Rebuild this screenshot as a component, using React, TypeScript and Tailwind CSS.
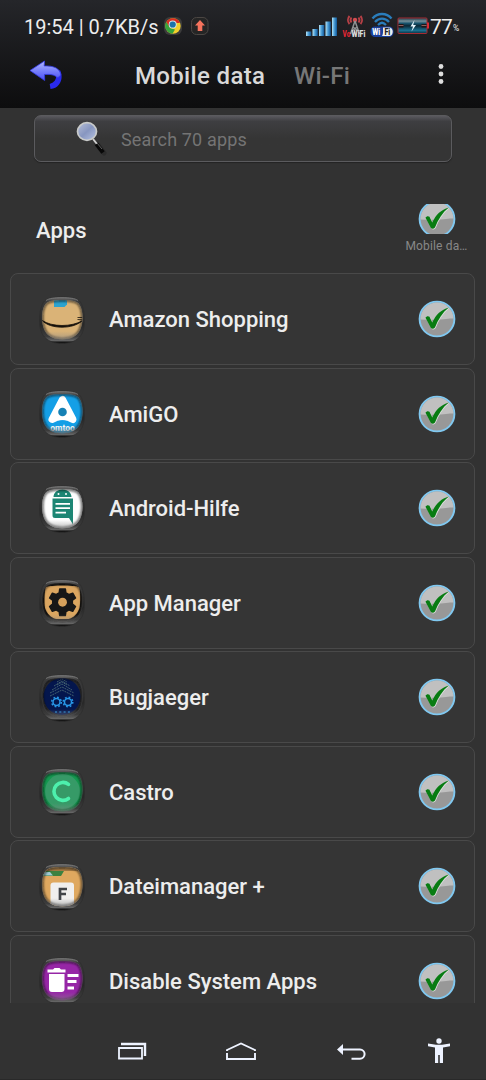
import type { ReactNode } from 'react';

type AppItem = {
  id: string;
  name: string;
  art: ReactNode;
};

const SHELL =
  'M24 1C32 1 38 1.800 41.500 5C45 9 46.500 17 46.500 24C46.500 31 45.500 36.500 41.500 41C37.500 45.500 31 47.500 24 47.500C17 47.500 10.500 45.500 6.500 41C2.500 36.500 1.500 31 1.500 24C1.500 17 3 9 6.500 5C10 1.800 16 1 24 1Z';
const FACE =
  'M24.300 4C31 4 37.500 4.500 40.500 7.500C43.500 11 44.600 17 44.500 22C44.300 29 42.500 35 38.500 38.800C35 42 30 43.300 24.300 43.300C18.500 43.300 13.500 42 10 38.800C6 35 4.200 29 4.100 22C4 17 5 11 8 7.500C11 4.500 17.500 4 24.300 4Z';

const GEAR =
  'M19.14 12.94c.04-.3.06-.61.06-.94s-.02-.64-.07-.94l2.03-1.58a.49.49 0 0 0 .12-.61l-1.92-3.32a.49.49 0 0 0-.59-.22l-2.39.96a7 7 0 0 0-1.62-.94l-.36-2.54a.48.48 0 0 0-.48-.41h-3.84a.48.48 0 0 0-.47.41l-.36 2.54c-.59.24-1.13.57-1.62.94l-2.39-.96a.49.49 0 0 0-.59.22L2.74 8.87a.48.48 0 0 0 .12.61l2.03 1.58c-.05.3-.09.63-.09.94s.02.64.07.94l-2.03 1.58a.49.49 0 0 0-.12.61l1.92 3.32c.12.22.37.29.59.22l2.39-.96c.5.38 1.030.7 1.620.94l.36 2.540c.05.24.24.41.48.41h3.840c.24 0 .44-.17.47-.41l.36-2.540c.59-.24 1.130-.56 1.620-.94l2.390.96c.22.08.47 0 .59-.22l1.920-3.320a.48.48 0 0 0-.12-.61z';

const TICK =
  'M7.500 17.800c1-1.500 2.500-2 4-1l2.800 5.700C18 14.500 23 9.800 30.800 7.500 24.500 12.500 20 19.500 17 27.500c-1.300 1.700-3.200 1.700-4.200.3z';

const apps: AppItem[] = [
  {
    id: 'amazon',
    name: 'Amazon Shopping',
    art: (
      <>
        <rect width="48" height="48" fill="#dab377" />
        <path d="M16 3h13v5.500L26.500 11H16z" fill="#2ba3cf" />
        <path
          d="M4 24.300c5 3.400 12 5.200 20 5.200s15-1.800 20-4.500c-5 4.200-12 6.200-20 6.200S8 29 4 24.300z"
          fill="#17110b"
          stroke="#17110b"
          strokeWidth="0.8"
        />
        <path d="M39.500 21.500h5M39.500 23.500l5 .3" stroke="#17110b" strokeWidth="0.800" />
      </>
    )
  },
  {
    id: 'amigo',
    name: 'AmiGO',
    art: (
      <>
        <rect width="48" height="48" fill="#149fe6" />
        <path
          d="M24.500 9.500L14 29.500c3-2 7-2.800 10.500-2.800S32 27.500 35 29.500z"
          fill="#fff"
          stroke="#fff"
          strokeWidth="7"
          strokeLinejoin="round"
        />
        <path d="M17 34c2.500-5 12.500-5 15 0z" fill="#149fe6" />
        <circle cx="24.500" cy="22" r="4.300" fill="#1581b5" />
        <text
          x="24.500"
          y="41"
          textAnchor="middle"
          className="fill-white font-['Roboto'] text-[8.500px] font-bold"
        >
          omtoo
        </text>
      </>
    )
  },
  {
    id: 'hilfe',
    name: 'Android-Hilfe',
    art: (
      <>
        <rect width="48" height="48" fill="#fdfdfd" />
        <path
          d="M15.500 12c0-4.500 4-7.500 9-7.500s9 3 9 7.500zM14.500 13.500h20.500v26l-4-6.500H17a2.500 2.500 0 0 1-2.500-2.500z"
          fill="#1c8573"
        />
        <circle cx="20.500" cy="9" r="1" fill="#fff" />
        <circle cx="28" cy="9" r="1" fill="#fff" />
        <path d="M17.500 18.800h14.500M17.500 23.200h14.500M17.500 27.700h10.500" stroke="#fff" strokeWidth="1.700" />
      </>
    )
  },
  {
    id: 'manager',
    name: 'App Manager',
    art: (
      <>
        <rect width="48" height="48" fill="#191613" />
        <path
          d="M8 8c5-2 28-2 33 0 1.500 2 1.500 16 .5 21-1.500 5-6 10-11 11H18C13 39 8.500 34 7 29 6 24 6.500 10 8 8z"
          fill="#dba660"
        />
        <g transform="translate(6.900 5.600) scale(1.470)">
          <path d={GEAR} fill="#171717" />
          <circle cx="12" cy="12" r="3" fill="#d6a15c" />
        </g>
      </>
    )
  },
  {
    id: 'bugjaeger',
    name: 'Bugjaeger',
    art: (
      <>
        <rect width="48" height="48" fill="#2b2b2e" />
        <circle cx="24" cy="22.500" r="18.500" fill="#04164d" />
        <g fill="none" stroke="#42606e" strokeWidth="1" strokeDasharray="2 .7">
          <path d="M19 8l5-3 5 3M16 12l8-5 8 5M19 11l5-3 5 3M14 16l10-6 10 6M12 19l12-6 12 6M12 22l12-6 12 6" />
        </g>
        <g fill="none" stroke="#2897e8" strokeWidth="1.500">
          <circle cx="18.500" cy="28" r="3.500" />
          <circle cx="30" cy="28" r="3.500" />
          <circle cx="18.500" cy="28" r="4.800" strokeDasharray="1.800 1.970" />
          <circle cx="30" cy="28" r="4.800" strokeDasharray="1.800 1.970" />
          <path d="M17 38h15" stroke="#1c74bb" strokeWidth="1.700" strokeDasharray="2 2.300" />
        </g>
      </>
    )
  },
  {
    id: 'castro',
    name: 'Castro',
    art: (
      <>
        <rect width="48" height="48" fill="#14984f" />
        <circle cx="24.500" cy="23.500" r="17.500" fill="#369a67" />
        <path
          d="M30.500 16.300a9 9 0 1 0 0 14.200"
          fill="none"
          stroke="#4df0ad"
          strokeWidth="3.600"
          strokeLinecap="round"
        />
      </>
    )
  },
  {
    id: 'datei',
    name: 'Dateimanager +',
    art: (
      <>
        <rect width="48" height="48" fill="#dfa85f" />
        <path d="M4 3h40v5H4z" fill="#a77c45" />
        <path d="M4 12l4-4h18l-3 5H4z" fill="#3c8140" />
        <path d="M4 12.500h11l-3-3.500H7z" fill="#9fcbd3" />
        <rect x="12.500" y="19.500" width="23.500" height="25" rx="3" fill="#f0efee" />
        <path d="M22 37V26h7M22 31h6" fill="none" stroke="#414448" strokeWidth="2.700" />
      </>
    )
  },
  {
    id: 'disable',
    name: 'Disable System Apps',
    art: (
      <>
        <rect width="48" height="48" fill="#9626a6" />
        <path
          d="M9.500 12.500h5.500l1.500-1.500h5l1.500 1.500h4.500v3H9.500zM11 17h15.500v15a3 3 0 0 1-3 3h-9.500a3 3 0 0 1-3-3z"
          fill="#fff"
        />
        <path d="M29.500 18.500h11M29.500 24.500h9M29.500 31h6.500" stroke="#fff" strokeWidth="2.900" />
      </>
    )
  }
];

const AppIcon = ({ id, art }: { id: string; art: ReactNode }) => (
  <svg viewBox="0 0 48 49" className="mt-0.5 h-[49px] w-12 shrink-0">
    <defs>
      <clipPath id={`face-${id}`}>
        <path d={FACE} />
      </clipPath>
      <linearGradient id={`shell-${id}`} x1="0" y1="0" x2="0" y2="1">
        <stop offset="0" stopColor="#727272" />
        <stop offset=".1" stopColor="#3a3a3a" />
        <stop offset=".6" stopColor="#272727" />
        <stop offset=".85" stopColor="#3c3c3c" />
        <stop offset=".94" stopColor="#666" />
        <stop offset=".97" stopColor="#151515" />
      </linearGradient>
      <linearGradient id={`lip-${id}`} x1="0" y1="0" x2="0" y2="1">
        <stop offset=".8" stopColor="#888" stopOpacity="0" />
        <stop offset="1" stopColor="#888" stopOpacity=".6" />
      </linearGradient>
      <filter id={`soft-${id}`} x="-10%" y="-10%" width="120%" height="120%">
        <feGaussianBlur stdDeviation="0.900" />
      </filter>
    </defs>
    <path d={SHELL} fill={`url(#shell-${id})`} stroke="#2d2d2d" strokeWidth="0.8" />
    <g clipPath={`url(#face-${id})`}>
      {art}
      <path
        d={FACE}
        fill="none"
        stroke="#111"
        strokeOpacity=".65"
        strokeWidth="2.800"
        filter={`url(#soft-${id})`}
      />
      <rect width="48" height="44" fill={`url(#lip-${id})`} />
    </g>
    <path d={FACE} fill="none" stroke="#777" strokeOpacity=".3" strokeWidth="0.700" />
    <path d="M8 4.500C11 2.400 16 1.700 24 1.700s13 .7 16 2.800" fill="none" stroke="#777" strokeWidth="0.900" />
  </svg>
);

const CheckBadge = ({ cropped = false }: { cropped?: boolean }) => (
  <svg
    viewBox={cropped ? '0 4 38 30' : '0 0 38 38'}
    className={cropped ? 'h-[30px] w-[38px]' : 'size-[38px]'}
  >
    <circle cx="19" cy="19" r="17.400" fill="#989898" stroke="#80c8f0" strokeWidth="1.900" />
    <path d="M2.500 19.500a16.500 16.500 0 0 1 33-1C29 18 24 20.500 2.500 19.500z" fill="#c0c0c0" />
    <path d={TICK} fill="#e0e0e0" transform="translate(.7 .6)" />
    <path d={TICK} fill="#087c12" />
  </svg>
);

const StatusBar = () => (
  <div className="flex h-[52px] items-center pl-6 text-[#ededed]">
    <span className="mt-0.5 w-[135px] text-[20px] leading-6 whitespace-nowrap">
      19:54 | 0,7KB/s
    </span>
    <svg viewBox="0 0 20 20" className="ml-1 size-5">
      <rect x="1" y="1" width="18" height="18" rx="6" fill="#3b3b3b" />
      <circle cx="10" cy="10" r="7.700" fill="#f2cf2c" />
      <path d="M3.300 6A7.700 7.700 0 0 1 17 7h-7L6.500 12z" fill="#d92d22" />
      <path d="M3.300 6A7.700 7.700 0 0 0 9.500 17.700L12 13.500 7 12z" fill="#36a43c" />
      <circle cx="9.700" cy="8.500" r="4" fill="#d7e5e8" />
      <circle cx="9.700" cy="8.500" r="3.100" fill="#1b73ab" />
    </svg>
    <svg viewBox="0 0 20 20" className="ml-[7px] size-5">
      <rect x="1.500" y="1.500" width="16.500" height="17" rx="5" fill="#252525" stroke="#4b4643" />
      <path d="M10 4l5 5.500h-2.700V15H7.700V9.500H5z" fill="#f6735d" />
    </svg>
    <svg viewBox="0 0 34 24" className="ml-[95px] h-6 w-[34px]">
      <defs>
        <linearGradient id="bar">
          <stop stopColor="#b8e4f5" />
          <stop offset=".5" stopColor="#4599d3" />
          <stop offset="1" stopColor="#125595" />
        </linearGradient>
      </defs>
      <g fill="url(#bar)">
        <path d="M1 17.500h5.300v4.500H1z" />
        <path d="M7.500 15h5.300v7H7.500z" />
        <path d="M14 11h5.300v11H14z" />
        <path d="M20.500 7.500h5.300V22h-5.300z" />
        <path d="M27 3.500h5V22h-5z" />
      </g>
    </svg>
    <svg viewBox="0 0 28 26" className="mt-0.5 ml-[2px] h-[26px] w-7">
      <path
        d="M10.500 8.500a4 4 0 0 1 0-5M8.500 10a6 6 0 0 1 0-8M17.500 8.500a4 4 0 0 0 0-5M19.500 10a6 6 0 0 0 0-8"
        fill="none"
        stroke="#b94147"
        strokeWidth="1.900"
      />
      <circle cx="14" cy="6" r="2.200" fill="#d24d50" />
      <path d="M14 7L9.500 20M14 7l4.500 13M12 13l5 4M16 13l-5 4" stroke="#8f9293" strokeWidth="1.500" />
      <text transform="translate(1.500 22.500) scale(.72 1)" className="fill-[#dd2634] font-['Roboto'] text-[9px] font-black">
        Vo
      </text>
      <text transform="translate(10.600 22.500) scale(.78 1)" className="fill-[#ddd] font-['Roboto'] text-[9px] font-black">
        WiFi
      </text>
    </svg>
    <svg viewBox="0 0 24 28" className="ml-px h-7 w-6">
      <path
        d="M2.500 6.500c5-6 14-6 19 0M5 10c4-4.500 10-4.500 14 0M8 13c3-3 5-3 8 0"
        fill="none"
        stroke="#2a7dbc"
        strokeWidth="2.300"
      />
      <rect x=".5" y="14.500" width="23" height="10.500" rx="4.500" fill="#193f9c" />
      <path d="M13 15.500h6c5 0 5 8.500 0 8.500h-7c1.500-2 1-6 1-8.500z" fill="#eee" />
      <text transform="translate(2.200 23) scale(.78 1)" className="fill-white font-['Roboto'] text-[9px] font-black">
        Wi
      </text>
      <text transform="translate(14.500 23) scale(.78 1)" className="fill-[#202020] font-['Roboto'] text-[9px] font-black">
        Fi
      </text>
    </svg>
    <svg viewBox="0 0 33 20" className="ml-[3px] h-5 w-[33px]">
      <defs>
        <linearGradient id="battery" x1="0" y1="0" x2="0" y2="1">
          <stop stopColor="#173442" />
          <stop offset=".2" stopColor="#75909a" />
          <stop offset=".35" stopColor="#17536c" />
          <stop offset=".5" stopColor="#0a2735" />
          <stop offset=".8" stopColor="#1a7191" />
          <stop offset="1" stopColor="#0a3140" />
        </linearGradient>
      </defs>
      <rect x="1" y="2" width="29" height="15.500" rx="1" fill="url(#battery)" stroke="#a62b32" />
      <path d="M30 6.500h2v6h-2z" fill="#dd2a34" />
      <path d="M1.500 8h5v3.500h-5zM24.500 8h5v3.500h-5z" fill="#241517" />
      <path d="M1.500 9h5v1h-5zM24.500 9h5v1h-5z" fill="#8a6260" />
      <path d="M17.500 4L13.500 10.500h2.500l-1.500 5 4.500-6.500h-2.800z" fill="#e4f4fb" />
    </svg>
    <span className="mt-0.5 w-[23px] text-[21px] leading-6 tracking-[-0.800px]">77</span>
    <span className="mt-[5px] text-[8.500px]">%</span>
  </div>
);

const TitleBar = () => (
  <div className="flex h-14 items-center pb-2.5">
    <svg viewBox="0 0 34 32" className="mt-0.5 ml-[29px] h-8 w-[34px]">
      <defs>
        <linearGradient id="back" x1="0" y1="0" x2="0" y2="1">
          <stop stopColor="#b4b9ff" />
          <stop offset=".5" stopColor="#7981fa" />
          <stop offset="1" stopColor="#4a4df5" />
        </linearGradient>
      </defs>
      <path
        d="M27 13l4-3c4 8 .5 18-9.500 19l-.8-5c5-1.500 7.300-5 6.300-11z"
        fill="#2a2aee"
      />
      <path
        d="M1 10.500L15.500 1l-.3 5C24 5.500 31 8 31.800 15c-2.500 3-3.500 3-5.500 1-2.500-1.500-6-1.800-10.800-1.500l.2 6z"
        fill="url(#back)"
        stroke="#343bea"
        strokeWidth="0.8"
      />
    </svg>
    <h1 className="mt-px ml-[72px] w-[131px] text-[24px] leading-7 font-medium tracking-[0.340px] whitespace-nowrap text-[#d9d9d9]">
      Mobile data
    </h1>
    <span className="mt-px ml-7 w-[58px] text-[24px] leading-7 font-medium tracking-[0.300px] whitespace-nowrap text-[#777]">
      Wi-Fi
    </span>
    <svg viewBox="0 0 6 22" className="-mt-0.5 ml-[86px] h-[22px] w-1.5 fill-[#dedede]">
      <circle cx="3" cy="3.500" r="2.400" />
      <circle cx="3" cy="11" r="2.400" />
      <circle cx="3" cy="18.500" r="2.400" />
    </svg>
  </div>
);

const SearchField = () => (
  <div className="mx-[34px] mt-[7px] flex h-[47px] items-center rounded-[7px] border-[1.500px] border-[#5b5b5e] bg-linear-to-b from-[#5a595e] from-0% via-[#3e3e41] via-12% to-[#353535] to-50% pl-[41px] shadow-[0_1px_1px_#232323]">
    <svg viewBox="0 0 32 36" className="mt-px h-9 w-8">
      <defs>
        <linearGradient id="lens" x1="0" y1="0" x2="1" y2="1">
          <stop stopColor="#b8c0d8" />
          <stop offset=".5" stopColor="#8796c0" />
          <stop offset="1" stopColor="#b9c5e4" />
        </linearGradient>
      </defs>
      <path d="M21 23l7 9" stroke="#222" strokeWidth="5" strokeLinecap="round" opacity=".5" />
      <path d="M17 18l4 5" stroke="#cfcfcf" strokeWidth="2" />
      <path d="M20.500 23l6.500 8.500" stroke="#080808" strokeWidth="4.200" />
      <path d="M21 22l5 6" stroke="#777" strokeWidth="0.800" />
      <ellipse cx="11" cy="10.500" rx="9.500" ry="8.800" fill="url(#lens)" stroke="#c9cbca" strokeWidth="1.700" />
    </svg>
    <span className="mt-[3px] ml-[13px] text-[18px] leading-6 tracking-[0.150px] text-[#747474]">
      Search 70 apps
    </span>
  </div>
);

const NavBar = () => (
  <nav className="flex h-[77px] shrink-0 items-center border-b border-[#292929] pt-5 text-[#eef3ff]">
    <svg viewBox="0 0 30 20" className="ml-[117px] h-5 w-[30px]" fill="none" stroke="currentColor" strokeWidth="1.800">
      <path d="M2 7h23v10.500H2z" />
      <path d="M4 3h24v12" strokeWidth="2.400" />
    </svg>
    <svg viewBox="0 0 32 20" className="ml-[78px] h-5 w-8" fill="none" stroke="currentColor" strokeWidth="1.900">
      <path d="M2 10V9L16 2.500 30 9v1M2 12v6h28v-6" />
    </svg>
    <svg viewBox="0 0 30 20" className="ml-[80px] h-5 w-[30px]" fill="none" stroke="currentColor" strokeWidth="2">
      <path d="M5 8.500h18a4.500 4.500 0 0 1 0 9.200h-8.500" />
      <path d="M0 8.500l6-5.500v11z" fill="currentColor" stroke="none" />
    </svg>
    <svg viewBox="0 0 24 28" className="ml-[60px] h-7 w-6" fill="currentColor">
      <circle cx="12" cy="4" r="2.700" />
      <path d="M1 6.500l8 1.200h6l8-1.200v2.700l-7 1.300V26h-3.200v-8h-1.600v8H8V10.500L1 9.200z" />
    </svg>
  </nav>
);

const App = () => {
  return (
    <div className="flex h-[1080px] w-[486px] flex-col overflow-hidden bg-[#323232] font-['Roboto',sans-serif]">
      <header className="h-[108px] shrink-0 bg-linear-to-b from-[#25262a] to-[#0d0d0e]">
        <StatusBar />
        <TitleBar />
      </header>
      <main className="min-h-0 flex-1 overflow-hidden">
        <SearchField />
        <div className="flex h-[111px] items-start justify-between pr-[17px] pl-9">
          <h2 className="mt-[55px] text-[22px] leading-7 font-medium text-[#ededed]">Apps</h2>
          <div className="mt-[42px] flex w-[65px] flex-col items-center">
            <CheckBadge cropped />
            <span className="mt-1 text-[12px] leading-4 tracking-[0.150px] whitespace-nowrap text-[#888]">
              Mobile da…
            </span>
          </div>
        </div>
        <ul className="flex flex-col gap-[2.500px] pr-[11px] pl-2.5">
          {apps.map((app) => (
            <li
              key={app.id}
              className="flex h-[92px] shrink-0 items-center rounded-[8px] border border-[#494949] bg-[#353535] pr-[18px] pl-[27px]"
            >
              <AppIcon id={app.id} art={app.art} />
              <span className="mt-[2px] ml-[23px] flex-1 text-[22px] leading-7 font-medium whitespace-nowrap text-[#ededed]">
                {app.name}
              </span>
              <CheckBadge />
            </li>
          ))}
        </ul>
      </main>
      <NavBar />
    </div>
  );
};

export default App;
